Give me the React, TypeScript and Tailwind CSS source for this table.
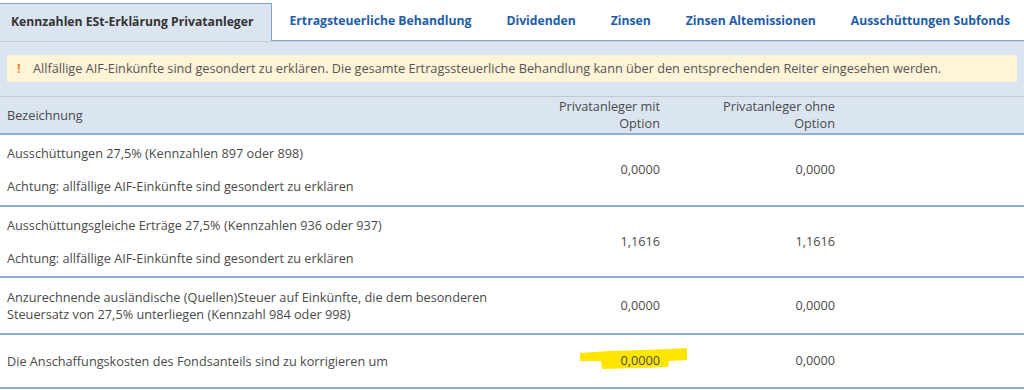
const TABS = [
  "Ertragsteuerliche Behandlung",
  "Dividenden",
  "Zinsen",
  "Zinsen Altemissionen",
  "Ausschüttungen Subfonds",
];

interface Row {
  label: string[];
  note?: string;
  withOption: string;
  withoutOption: string;
  highlight?: boolean;
  height: string;
}

const ROWS: Row[] = [
  {
    label: ["Ausschüttungen 27,5% (Kennzahlen 897 oder 898)"],
    note: "Achtung: allfällige AIF-Einkünfte sind gesondert zu erklären",
    withOption: "0,0000",
    withoutOption: "0,0000",
    height: "h-[72px]",
  },
  {
    label: ["Ausschüttungsgleiche Erträge 27,5% (Kennzahlen 936 oder 937)"],
    note: "Achtung: allfällige AIF-Einkünfte sind gesondert zu erklären",
    withOption: "1,1616",
    withoutOption: "1,1616",
    height: "h-[71px]",
  },
  {
    label: [
      "Anzurechnende ausländische (Quellen)Steuer auf Einkünfte, die dem besonderen",
      "Steuersatz von 27,5% unterliegen (Kennzahl 984 oder 998)",
    ],
    withOption: "0,0000",
    withoutOption: "0,0000",
    height: "h-[57px]",
  },
  {
    label: ["Die Anschaffungskosten des Fondsanteils sind zu korrigieren um"],
    withOption: "0,0000",
    withoutOption: "0,0000",
    highlight: true,
    height: "h-[54px]",
  },
];

function Marker() {
  // hand-drawn yellow highlighter stroke over the value
  return (
    <svg
      aria-hidden="true"
      className="absolute left-[-41px] top-[-5px]"
      width="110"
      height="24"
      viewBox="0 0 110 24"
    >
      <polygon
        points="1,7 30,5 62,4 88,3 108,2 108,14 90,15 89,21 60,22 23,23 22,15 1,15"
        fill="#ffe600"
      />
    </svg>
  );
}

function TableRow({ row }: { row: Row }) {
  return (
    <div
      className={`grid grid-cols-[540px_120px_175px_1fr] items-center border-b-2 border-[#8eaed3] ${row.height}`}
    >
      <div className="pl-[7px] leading-[17px]">
        {row.label.map((l) => (
          <div key={l}>{l}</div>
        ))}
        {row.note && <div className="mt-[16px]">{row.note}</div>}
      </div>
      <div className="text-right">
        <span className="relative inline-block">
          {row.highlight && <Marker />}
          <span className="relative">{row.withOption}</span>
        </span>
      </div>
      <div className="text-right">{row.withoutOption}</div>
      <div />
    </div>
  );
}

export default function App() {
  return (
    <div
      className="h-[390px] w-[1024px] overflow-hidden bg-white text-[12.7px] text-[#4a4a4a]"
      style={{ fontFamily: '"Open Sans", "Liberation Sans", sans-serif' }}
    >
      {/* tab strip */}
      <div className="flex h-[41px] items-end whitespace-nowrap">
        <div className="flex h-[38px] items-center border-t border-r border-[#7ea3cc] bg-[#dbe5f1] pl-[11px] pr-[18px] text-[12.2px] font-bold text-[#333]">
          Kennzahlen ESt-Erklärung Privatanleger
        </div>
        <div className="flex h-[38px] flex-1 items-center gap-[35px] border-b border-[#7ea3cc] pl-[17px] text-[12.2px] font-bold text-[#1d5ca8]">
          {TABS.map((t) => (
            <span key={t}>{t}</span>
          ))}
        </div>
      </div>

      {/* info panel */}
      <div className="border-t border-[#c9cfd6] bg-[#dbe5f1] px-[7px] pt-[13px] pb-[14px]">
        <div className="flex h-[27px] items-center whitespace-nowrap bg-[#fff4d8] pl-[10px] text-[#555]">
          <span className="w-[16px] font-bold text-[#e8892b]">!</span>
          <span>
            Allfällige AIF-Einkünfte sind gesondert zu erklären. Die gesamte
            Ertragssteuerliche Behandlung kann über den entsprechenden Reiter
            eingesehen werden.
          </span>
        </div>
      </div>

      {/* header row */}
      <div className="grid h-[39px] grid-cols-[540px_120px_175px_1fr] items-center border-t border-b-2 border-t-[#c4c8cc] border-b-[#8eaed3] bg-[#dbe5f1] leading-[17px]">
        <div className="pl-[7px]">Bezeichnung</div>
        <div className="text-right">
          Privatanleger mit
          <br />
          Option
        </div>
        <div className="text-right">
          Privatanleger ohne
          <br />
          Option
        </div>
        <div />
      </div>

      {ROWS.map((row) => (
        <TableRow key={row.label[0]} row={row} />
      ))}
    </div>
  );
}
